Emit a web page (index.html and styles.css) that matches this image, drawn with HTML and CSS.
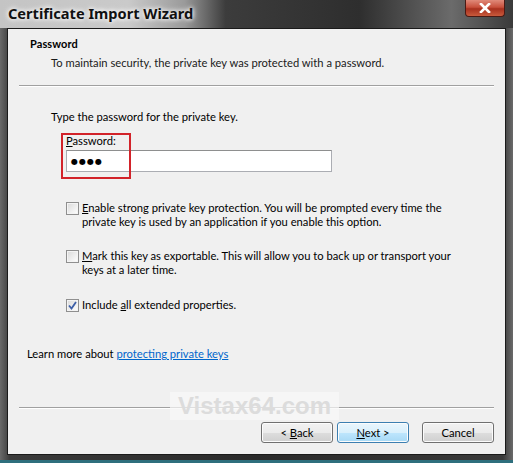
FILE: index.html
```html
<!DOCTYPE html>
<html lang="en">
<head>
    <meta charset="UTF-8">
    <title>Certificate Import Wizard</title>
    <link rel="stylesheet" href="styles.css">
</head>
<body>
    <div class="window">
        <div class="titlebar">
            <span class="title">Certificate Import Wizard</span>
            <div class="close-btn">
                <svg width="14" height="10" viewBox="0 0 14 10">
                    <path d="M3 1 L11 9 M11 1 L3 9" stroke="#fff" stroke-width="2.6" stroke-linecap="square"/>
                </svg>
            </div>
        </div>

        <div class="client">
            <div class="header">
                <div class="header-title">Password</div>
                <div class="header-sub">To maintain security, the private key was protected with a password.</div>
            </div>
            <div class="sep"></div>

            <div class="content">
                <p class="intro">Type the password for the private key.</p>

                <div class="pw-field">
                    <label class="pw-label"><u>P</u>assword:</label>
                    <div class="pw-input"><span class="dots">●●●●</span></div>
                    <div class="highlight"></div>
                </div>

                <div class="option">
                    <span class="checkbox"></span>
                    <span class="option-text accel">Enable strong private key protection. You will be prompted every time the private key is used by an application if you enable this option.</span>
                </div>
                <div class="option">
                    <span class="checkbox"></span>
                    <span class="option-text accel">Mark this key as exportable. This will allow you to back up or transport your keys at a later time.</span>
                </div>
                <div class="option">
                    <span class="checkbox checked">
                        <svg width="9" height="9" viewBox="0 0 9 9">
                            <path d="M1 4.5 L3.5 7.5 L8 1" fill="none" stroke="#3d5fa8" stroke-width="1.8"/>
                        </svg>
                    </span>
                    <span class="option-text">Include <u>a</u>ll extended properties.</span>
                </div>
            </div>

            <p class="learn">Learn more about <a href="#">protecting private keys</a></p>

            <div class="footer">
                <div class="sep"></div>
                <div class="watermark">Vistax64.com</div>
                <div class="buttons">
                    <button class="btn">&lt; <u>B</u>ack</button>
                    <button class="btn default"><u>N</u>ext &gt;</button>
                    <button class="btn cancel">Cancel</button>
                </div>
            </div>
        </div>
    </div>
</body>
</html>
```

FILE: styles.css
```css
body {
    margin: 0;
    background: #1c1c1c;
    font-family: Lato, "Noto Sans", sans-serif;
    font-size: 11.2px;
    color: #000;
}

.window {
    width: 513px;
    height: 463px;
    box-sizing: border-box;
    display: flex;
    flex-direction: column;
    background: linear-gradient(to right, #6a6a6a 0, #3a3a3a 2%, #2a2a2a 50%, #3a3a3a 98%, #6a6a6a 100%);
    padding: 0 7px 5px 7px;
    border-bottom: 3px solid #2f6f7d;
    position: relative;
}

/* title bar, glass look */
.titlebar {
    height: 28px;
    margin: 0 -7px;
    padding: 0 8px;
    display: flex;
    align-items: center;
    background: linear-gradient(to right, #c4c4c4 0, #cacaca 25%, #9a9a9a 36%, #3c3c3c 44%, #2e2e2e 70%, #6b6b6b 88%, #3a3a3a 100%);
    position: relative;
}

.title {
    font-family: "Noto Sans", sans-serif;
    font-weight: bold;
    font-size: 14.6px;
    color: #111;
    text-shadow: 0 0 6px #fff, 0 0 4px #fff;
    margin-top: -2px;
}

.close-btn {
    position: absolute;
    right: 8px;
    top: 0;
    width: 40px;
    height: 17px;
    border: 1px solid #4a1a14;
    border-top: none;
    border-radius: 0 0 4px 4px;
    background: linear-gradient(to bottom, #e08a7a 0, #c8503c 45%, #a8301e 55%, #c85a3c 100%);
    display: flex;
    align-items: center;
    justify-content: center;
    box-sizing: border-box;
}

.client {
    flex: 1;
    background: #f0f0f0;
    border: 1px solid #1a1a1a;
    display: flex;
    flex-direction: column;
}

.header {
    padding: 7px 0 0 22px;
    height: 56px;
    box-sizing: border-box;
}

.header-title {
    font-weight: bold;
    font-size: 11px;
    line-height: 16px;
    letter-spacing: 0.1px;
}

.header-sub {
    padding-left: 21px;
    margin-top: 3px;
    line-height: 16px;
    color: #1a1a1a;
}

.sep {
    height: 1px;
    background: #a0a0a0;
    border-bottom: 1px solid #fff;
    margin: 0 11px 0 11px;
}

.content {
    padding-left: 43px;
}

.intro {
    margin: 22px 0 0 0;
    line-height: 16px;
}

.pw-field {
    position: relative;
    margin: 8px 0 0 15px;
}

.pw-label {
    display: block;
    line-height: 16px;
    margin-bottom: 1px;
}

.pw-input {
    width: 266px;
    height: 22px;
    box-sizing: border-box;
    background: #fff;
    border: 1px solid #abadb3;
    border-top-color: #8e8f8f;
    display: flex;
    align-items: center;
    padding-left: 4px;
}

.dots {
    font-family: "DejaVu Sans", sans-serif;
    font-size: 8px;
    letter-spacing: 1px;
}

.highlight {
    position: absolute;
    left: -5px;
    top: 0;
    width: 70px;
    height: 46px;
    box-sizing: border-box;
    border: 2px solid #d2232a;
}

.option {
    display: flex;
    align-items: flex-start;
    margin: 29px 0 0 15px;
    width: 385px;
}

.option + .option {
    margin-top: 20px;
}

.option:last-child {
    margin-top: 21px;
}

.checkbox {
    flex: none;
    width: 13px;
    height: 13px;
    box-sizing: border-box;
    border: 1px solid #8f8f8f;
    background: linear-gradient(135deg, #d9d9d9 0, #f4f4f4 70%, #fff 100%);
    box-shadow: inset 0 0 0 1px #f4f4f4;
    margin: 1px 3px 0 0;
    display: flex;
    align-items: center;
    justify-content: center;
}

.option-text {
    line-height: 14px;
}

/* keyboard accelerator on the first letter */
.accel::first-letter {
    text-decoration: underline;
}

.learn {
    margin: 34px 0 0 19px;
    line-height: 16px;
}

.learn a {
    color: #0066cc;
}

.footer {
    margin-top: auto;
    position: relative;
    padding-bottom: 11px;
}

.watermark {
    position: absolute;
    left: 162px;
    top: -15px;
    padding: 0 8px;
    font-family: "Liberation Sans", Arial, sans-serif;
    font-weight: bold;
    font-size: 24px;
    line-height: 28px;
    color: #dcdcdc;
    background: rgba(248, 248, 248, 0.7);
}

.buttons {
    display: flex;
    justify-content: flex-end;
    gap: 4px;
    padding-right: 11px;
    margin-top: 13px;
}

.btn {
    width: 72px;
    height: 21px;
    font-family: inherit;
    font-size: 11.2px;
    padding: 0;
    border: 1px solid #707070;
    border-radius: 3px;
    background: linear-gradient(to bottom, #f2f2f2 0, #ebebeb 50%, #dddddd 51%, #cfcfcf 100%);
    box-shadow: inset 0 0 0 1px #fcfcfc;
    color: #000;
}

.btn.default {
    border-color: #3c7fb1;
    background: linear-gradient(to bottom, #eaf6fd 0, #d9f0fc 50%, #bee6fd 51%, #a7d9f5 100%);
}

.btn.cancel {
    margin-left: 9px;
}
```
